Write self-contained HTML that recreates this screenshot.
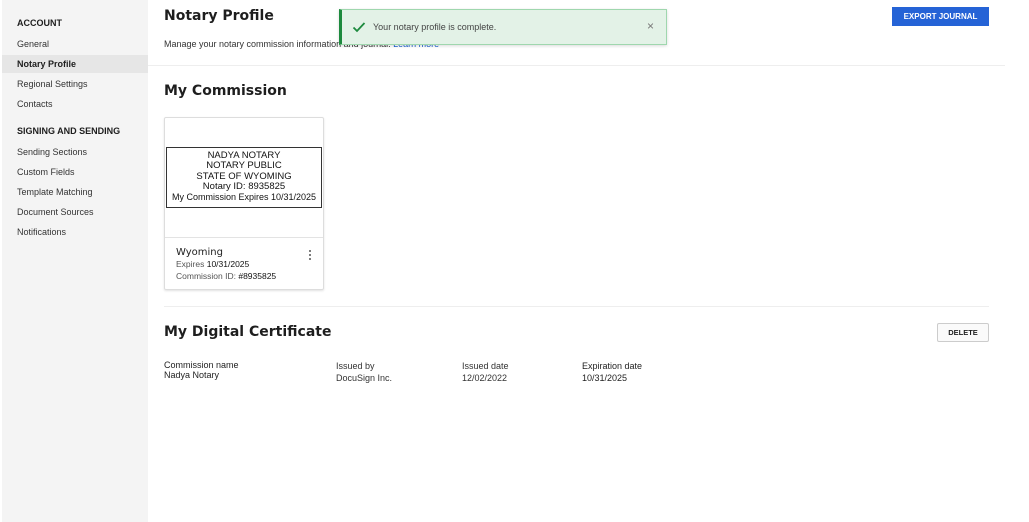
<!DOCTYPE html>
<html><head><style>
*{margin:0;padding:0;box-sizing:border-box}
body{width:1029px;height:522px;background:#fff;font-family:"Liberation Sans",sans-serif;position:relative;overflow:hidden;color:#1e1e1e}
.a{position:absolute;white-space:nowrap}
.side{position:absolute;left:2px;top:0;width:146px;height:522px;background:#f4f4f4}
.side div{position:absolute;left:15px;font-size:9px;color:#333}
.side .h{font-weight:bold;color:#1e1e1e}
.sel{position:absolute;left:0!important;width:146px;height:18px;background:#e6e6e6}
h1,h2{font-family:"DejaVu Sans",sans-serif;font-weight:bold;letter-spacing:0}
</style></head><body>
<div class="side">
<div class="h" style="top:18px">ACCOUNT</div>
<div style="top:39px">General</div>
<div class="sel" style="top:55px"></div>
<div style="top:59px;color:#1e1e1e;font-weight:bold">Notary Profile</div>
<div style="top:79px">Regional Settings</div>
<div style="top:99px">Contacts</div>
<div class="h" style="top:126px">SIGNING AND SENDING</div>
<div style="top:147px">Sending Sections</div>
<div style="top:167px">Custom Fields</div>
<div style="top:187px">Template Matching</div>
<div style="top:207px">Document Sources</div>
<div style="top:227px">Notifications</div>
</div>
<h1 class="a" style="left:164px;top:8px;font-size:14px">Notary Profile</h1>
<div class="a" style="left:164px;top:39px;font-size:9px;color:#333">Manage your notary commission information and journal. <span style="color:#1a5fd1">Learn more</span></div>
<div class="a" style="left:892px;top:7px;width:97px;height:19px;background:#2563d6;color:#fff;font-size:8px;font-weight:bold;text-align:center;line-height:19px">EXPORT JOURNAL</div>
<div class="a" style="left:339px;top:9px;width:328px;height:36px;background:#e3f2e7;border:1px solid #9fd7ae;border-left:3px solid #1d8a3e;box-shadow:0 1px 3px rgba(0,0,0,.15)">
<svg class="a" style="left:10px;top:11px" width="14" height="12" viewBox="0 0 14 12"><path d="M1.5 6.5 L5 10 L12.5 2" fill="none" stroke="#1d8a3e" stroke-width="1.8"/></svg>
<div class="a" style="left:31px;top:12px;font-size:9px;color:#444">Your notary profile is complete.</div>
<div class="a" style="left:305px;top:9px;font-size:12px;color:#777">×</div>
</div>
<div class="a" style="left:148px;top:65px;width:857px;height:1px;background:#eee"></div>
<h2 class="a" style="left:164px;top:83px;font-size:14px">My Commission</h2>
<div class="a" style="left:164px;top:117px;width:160px;height:173px;border:1px solid #ddd;border-radius:2px;box-shadow:0 1px 2px rgba(0,0,0,.12)">
<div class="a" style="left:1px;top:29px;width:156px;height:61px;border:1px solid #333;text-align:center;font-family:'Liberation Sans',sans-serif;font-size:9.5px;line-height:10.3px;padding-top:3px;color:#111">NADYA NOTARY<br>NOTARY PUBLIC<br>STATE OF WYOMING<br>Notary ID: 8935825<br><span style="font-size:9px">My Commission Expires 10/31/2025</span></div>
<div class="a" style="left:0;top:119px;width:158px;height:1px;background:#e3e3e3"></div>
<div class="a" style="left:11px;top:129px;font-size:10px;font-family:'DejaVu Sans',sans-serif">Wyoming</div>
<div class="a" style="left:11px;top:141px;font-size:8.5px;color:#555">Expires <span style="color:#111">10/31/2025</span></div>
<div class="a" style="left:11px;top:153px;font-size:8.5px;color:#555">Commission ID: <span style="color:#111">#8935825</span></div>
<div class="a" style="left:144px;top:131px;width:2px;height:11px;background:radial-gradient(circle,#666 1px,transparent 1.1px) 0 0/2px 4px"></div>
</div>
<div class="a" style="left:164px;top:306px;width:825px;height:1px;background:#eee"></div>
<h2 class="a" style="left:164px;top:324px;font-size:14px">My Digital Certificate</h2>
<div class="a" style="left:937px;top:323px;width:52px;height:19px;border:1px solid #ccc;border-radius:2px;background:#fafafa;font-size:7.5px;font-weight:bold;text-align:center;line-height:17px">DELETE</div>
<div class="a" style="left:164px;top:360px;font-size:9px;line-height:10px;color:#1e1e1e">Commission name<br>Nadya Notary</div>
<div class="a" style="left:336px;top:360px;font-size:9px;line-height:12px;color:#333">Issued by<br>DocuSign Inc.</div>
<div class="a" style="left:462px;top:360px;font-size:9px;line-height:12px;color:#333">Issued date<br>12/02/2022</div>
<div class="a" style="left:582px;top:360px;font-size:9px;line-height:12px;color:#1e1e1e">Expiration date<br>10/31/2025</div>
</body></html>
